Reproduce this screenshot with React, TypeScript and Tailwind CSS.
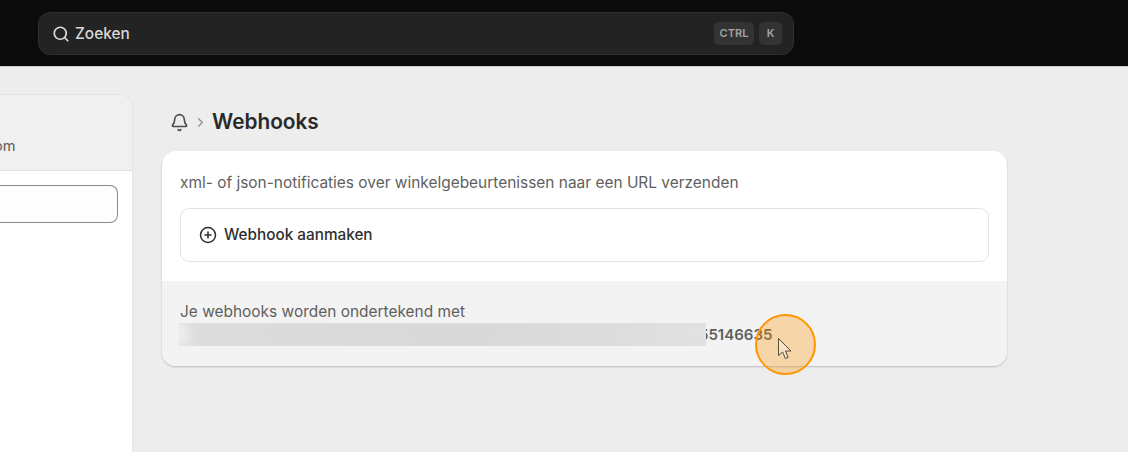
import React from 'react';
import { Search, ChevronRight, CirclePlus, Bell } from 'lucide-react';

const font = "font-['Inter','Liberation_Sans',sans-serif]";

const App = () => {
  return (
    <div className={`relative h-[452px] w-[1128px] overflow-hidden bg-[#ededed] flex flex-col ${font}`}>
      {/* Top bar */}
      <header className="h-[67px] shrink-0 bg-[#0b0b0b] border-b border-[#cfcfcf] pl-[38px] pt-3">
        <div className="h-[43px] w-[756px] rounded-xl bg-[#232323] border border-[#2e2e2e] flex items-center pl-[13px] pr-[11px]">
          <Search size={18} strokeWidth={2.25} className="text-[#dcdcdc]" />
          <span className="ml-[5px] text-[15.4px] font-[450] text-[#d8d8d8]">Zoeken</span>
          <div className="ml-auto flex gap-[5px]">
            <span className="h-[23px] w-[40px] rounded-[5px] bg-[#333333] flex items-center justify-center text-[11px] font-semibold text-[#a3a3a3]">CTRL</span>
            <span className="h-[23px] w-[23px] rounded-[5px] bg-[#333333] flex items-center justify-center text-[11px] font-semibold text-[#a3a3a3]">K</span>
          </div>
        </div>
      </header>

      <main className="flex-grow flex items-start">
        {/* Settings sidebar, cut off by the window */}
        <aside className="mt-[27px] w-[133px] h-[400px] shrink-0 overflow-hidden bg-white border border-l-0 border-[#e4e4e4] rounded-tr-[14px]">
          <div className="h-[76px] bg-[#f0f0f0] border-b border-[#e3e3e3] pt-[41px] -ml-[6px] text-[14.5px] leading-5 text-[#5c5c5c]">om</div>
          <div className="pt-[14px] pr-[14px]">
            <div className="h-[38px] rounded-r-lg border border-l-0 border-[#8a8a8a] bg-[#fdfdfd]"></div>
          </div>
        </aside>

        {/* Webhooks */}
        <section className="ml-[29px] w-[845px] pt-[42px]">
          <div className="h-[26px] pl-2 flex items-center">
            <Bell size={19} strokeWidth={2} className="text-[#4a4a4a]" />
            <ChevronRight size={15} strokeWidth={1.75} className="ml-[4px] text-[#8a8a8a]" />
            <h1 className="ml-[4px] text-[20.8px] font-semibold text-[#2a2a2a]">Webhooks</h1>
          </div>

          <div className="relative mt-[16px] rounded-[14px] overflow-hidden bg-white shadow-[0_1px_2px_rgba(0,0,0,0.22)]">
            <div className="px-[18px] pt-[22px] pb-[19px]">
              <p className="text-[15.45px] leading-5 text-[#5f5f5f]">xml- of json-notificaties over winkelgebeurtenissen naar een URL verzenden</p>
              <div className="mt-[15px] h-[54px] rounded-[9px] border border-[#e3e3e3] flex items-center pl-[18px]">
                <CirclePlus size={18} strokeWidth={2} className="text-[#2f2f2f]" />
                <span className="ml-[7px] text-[15.3px] font-[550] text-[#2f2f2f]">Webhook aanmaken</span>
              </div>
            </div>
            <div className="h-[85px] bg-[#f3f3f3] px-[18px] pt-[21px]">
              <p className="text-[15.45px] leading-5 text-[#5f5f5f]">Je webhooks worden ondertekend met</p>
              <div className="flex items-center h-[23px] -ml-[2px] mt-[1px]">
                <div className="relative z-10 w-[528px] h-[23px] shrink-0 overflow-hidden bg-[#dddddd]">
                  <div className="h-[23px] -mx-2 blur-[4px] bg-[linear-gradient(90deg,#f3f3f3_0%,#f0f0f0_1.5%,#dcdcdc_5%,#dadada_25%,#d8d8d8_55%,#dcdcdc_80%,#e2e2e2_100%)]"></div>
                </div>
                <span className="-ml-[7px] pt-[2px] text-[15px] font-semibold text-[#5f5f5f]">55146635</span>
              </div>
            </div>
          </div>
        </section>
      </main>

      {/* Click highlight and mouse pointer */}
      <div className="absolute left-[755px] top-[314px] h-[61px] w-[61px] rounded-full border-2 border-[#ff9500] bg-[#ff9500]/30 flex items-center justify-center">
        <svg width="18" height="24" viewBox="0 0 18 24" className="ml-[1px] mt-[8px]">
          <path d="M1.5 1.5 L1.5 18.5 L5.6 15 L8.4 21.5 L11.2 20.3 L8.4 14 L14 14 Z" fill="#f7e3c8" stroke="#5a4a3a" strokeWidth="1" strokeLinejoin="round" />
        </svg>
      </div>
    </div>
  );
};

export default App;
